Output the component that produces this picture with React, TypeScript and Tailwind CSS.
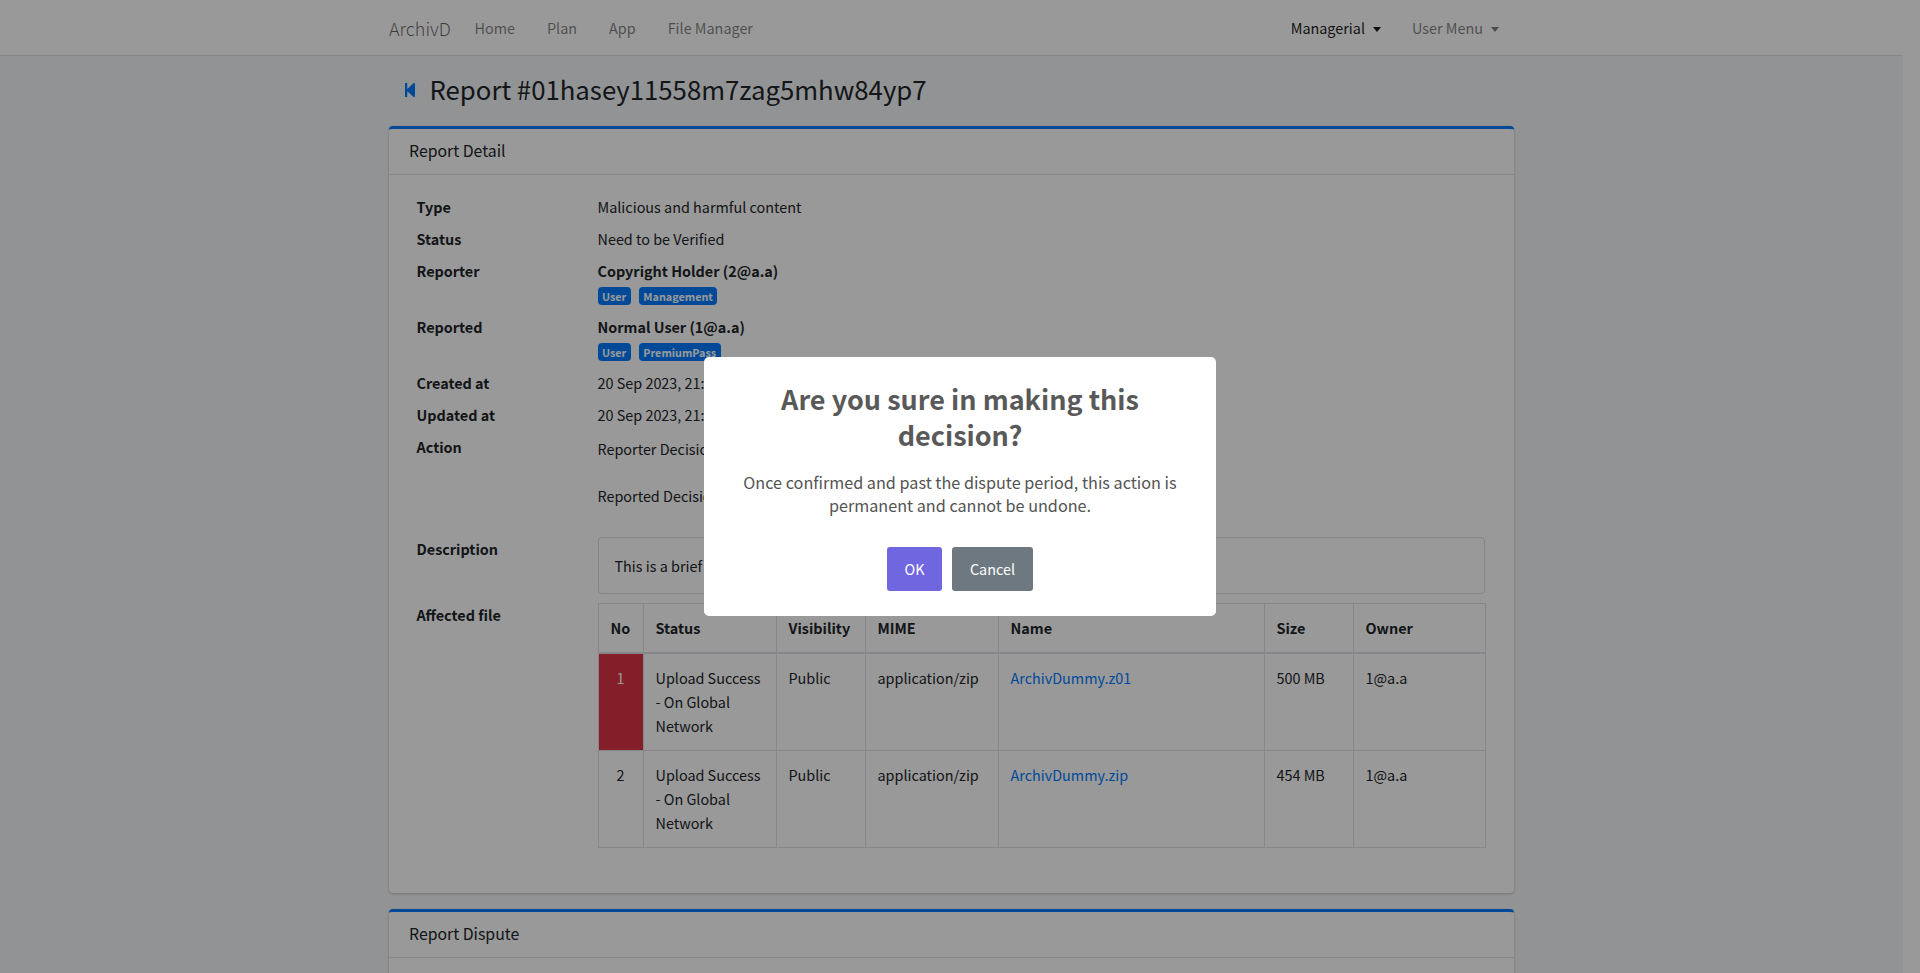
import { FaStepBackward } from 'react-icons/fa'

const NAV_LINKS = ['Home', 'Plan', 'App', 'File Manager']

const FILES = [
  { no: 1, name: 'ArchivDummy.z01', size: '500 MB', flagged: true },
  { no: 2, name: 'ArchivDummy.zip', size: '454 MB', flagged: false },
]

function Caret({ dark }: { dark?: boolean }) {
  return (
    <span className={`ml-2 inline-block border-x-[4px] border-t-[5px] border-x-transparent align-middle ${dark ? 'border-t-black/90' : 'border-t-black/50'}`} />
  )
}

function Badge({ label }: { label: string }) {
  return <span className="inline-block h-[18px] rounded bg-[#007bff] px-[4.5px] text-[10.8px] leading-[18px] font-bold text-white">{label}</span>
}

function Row({ label, children, className = 'mb-2' }: { label: string; children: React.ReactNode; className?: string }) {
  return (
    <div className={`grid grid-cols-[181px_1fr] ${className}`}>
      <div className="font-semibold">{label}</div>
      <div>{children}</div>
    </div>
  )
}

function Card({ title, children }: { title: string; children?: React.ReactNode }) {
  return (
    <section className="mb-4 rounded border-t-[3px] border-[#007bff] bg-white shadow-[0_0_1px_rgba(0,0,0,0.125),0_1px_3px_rgba(0,0,0,0.2)]">
      <div className="h-[46px] border-b border-black/[0.125] px-5 pt-[10px] text-[15.84px]">{title}</div>
      {children}
    </section>
  )
}

export default function App() {
  return (
    <div className="relative flex h-screen overflow-hidden bg-white font-['Noto_Sans_CJK_JP','Noto_Sans',sans-serif] text-[14.4px] leading-6 text-[#212529]">
      <div className="w-[1903px] shrink-0 bg-[#f4f6f9]">
        {/* Navbar */}
        <nav className="h-[56px] border-b border-[#dee2e6] bg-white">
          <div className="mx-auto flex h-full w-[1140px] items-center px-[7.5px]">
            <span className="mr-[15.5px] text-lg font-light text-black/60">ArchivD</span>
            <div className="flex">
              {NAV_LINKS.map((l) => (
                <a key={l} className="mr-[16px] px-2 text-black/50">{l}</a>
              ))}
            </div>
            <div className="ml-auto mr-[7px] flex">
              <a className="mr-[15px] px-2 text-black/90">Managerial<Caret dark /></a>
              <a className="px-2 text-black/50">User Menu<Caret /></a>
            </div>
          </div>
        </nav>

        <div className="mx-auto w-[1140px] px-[7.5px]">
          <div className="flex h-[70px] items-center pb-[5px]">
            <FaStepBackward className="mt-[3px] ml-[13px] text-[#007bff]" size={16} />
            <h1 className="ml-[11.5px] text-[25.75px] leading-[34px]">Report #01hasey11558m7zag5mhw84yp7</h1>
          </div>

          <Card title="Report Detail">
            <div className="pt-[20px] pr-[29px] pb-[45px] pl-[27.5px]">
              <Row label="Type">Malicious and harmful content</Row>
              <Row label="Status">Need to be Verified</Row>
              <Row label="Reporter">
                <div className="font-semibold">Copyright Holder (2@a.a)</div>
                <div className="flex h-6 items-center gap-2 pt-[2px]"><Badge label="User" /><Badge label="Management" /></div>
              </Row>
              <Row label="Reported">
                <div className="font-semibold">Normal User (1@a.a)</div>
                <div className="flex h-6 items-center gap-2 pt-[2px]"><Badge label="User" /><Badge label="PremiumPass" /></div>
              </Row>
              <Row label="Created at">20 Sep 2023, 21:08:14</Row>
              <Row label="Updated at">20 Sep 2023, 21:08:14</Row>
              <Row label="Action" className="mb-0 h-[102px]">
                <div className="pt-[2px]">Reporter Decision: None</div>
                <div className="mt-[23px]">Reported Decision: None</div>
              </Row>
              <Row label="Description" className="mb-[9px]">
                <div className="h-[57px] rounded-sm border border-black/[0.125] px-4 py-4">This is a brief description of the report</div>
              </Row>
              <Row label="Affected file" className="mb-0">
                <table className="w-[888px] table-fixed border-collapse">
                  <thead>
                    <tr className="h-[49px] border-b-2 border-[#dee2e6] text-left">
                      <th className="w-[45px] border border-[#dee2e6] text-center font-semibold">No</th>
                      <th className="w-[133px] border border-[#dee2e6] px-3 font-semibold">Status</th>
                      <th className="w-[89px] border border-[#dee2e6] px-3 font-semibold">Visibility</th>
                      <th className="w-[133px] border border-[#dee2e6] px-3 font-semibold">MIME</th>
                      <th className="w-[266px] border border-[#dee2e6] px-3 font-semibold">Name</th>
                      <th className="w-[89px] border border-[#dee2e6] px-3 font-semibold">Size</th>
                      <th className="border border-[#dee2e6] px-3 font-semibold">Owner</th>
                    </tr>
                  </thead>
                  <tbody>
                    {FILES.map((f) => (
                      <tr key={f.no} className="align-top">
                        <td className={`border border-[#dee2e6] py-3 text-center ${f.flagged ? 'bg-[#dc3545] text-white' : ''}`}>{f.no}</td>
                        <td className="border border-[#dee2e6] p-3">Upload Success - On Global Network</td>
                        <td className="border border-[#dee2e6] p-3">Public</td>
                        <td className="border border-[#dee2e6] p-3">application/zip</td>
                        <td className="border border-[#dee2e6] p-3"><a className="text-[#007bff]">{f.name}</a></td>
                        <td className="border border-[#dee2e6] p-3">{f.size}</td>
                        <td className="border border-[#dee2e6] p-3">1@a.a</td>
                      </tr>
                    ))}
                  </tbody>
                </table>
              </Row>
            </div>
          </Card>

          <Card title="Report Dispute">
            <div className="h-[120px]" />
          </Card>
        </div>
      </div>

      {/* Confirm dialog */}
      <div className="fixed inset-0 flex items-center justify-center bg-black/40">
        <div className="flex h-[259px] w-[512px] flex-col items-center rounded-[5px] bg-white px-4 pt-[24px]">
          <h2 className="w-[400px] text-center text-[27px] leading-9 font-semibold text-[#595959]">Are you sure in making this decision?</h2>
          <p className="mt-[18px] w-[450px] text-center text-[16.2px] leading-[23px] text-[#545454]">Once confirmed and past the dispute period, this action is permanent and cannot be undone.</p>
          <div className="mt-[30px] flex gap-[10px]">
            <button className="h-[44px] w-[55px] rounded-[3px] bg-[#7066e0] text-white">OK</button>
            <button className="h-[44px] w-[81px] rounded-[3px] bg-[#6e7881] text-white">Cancel</button>
          </div>
        </div>
      </div>
    </div>
  )
}
